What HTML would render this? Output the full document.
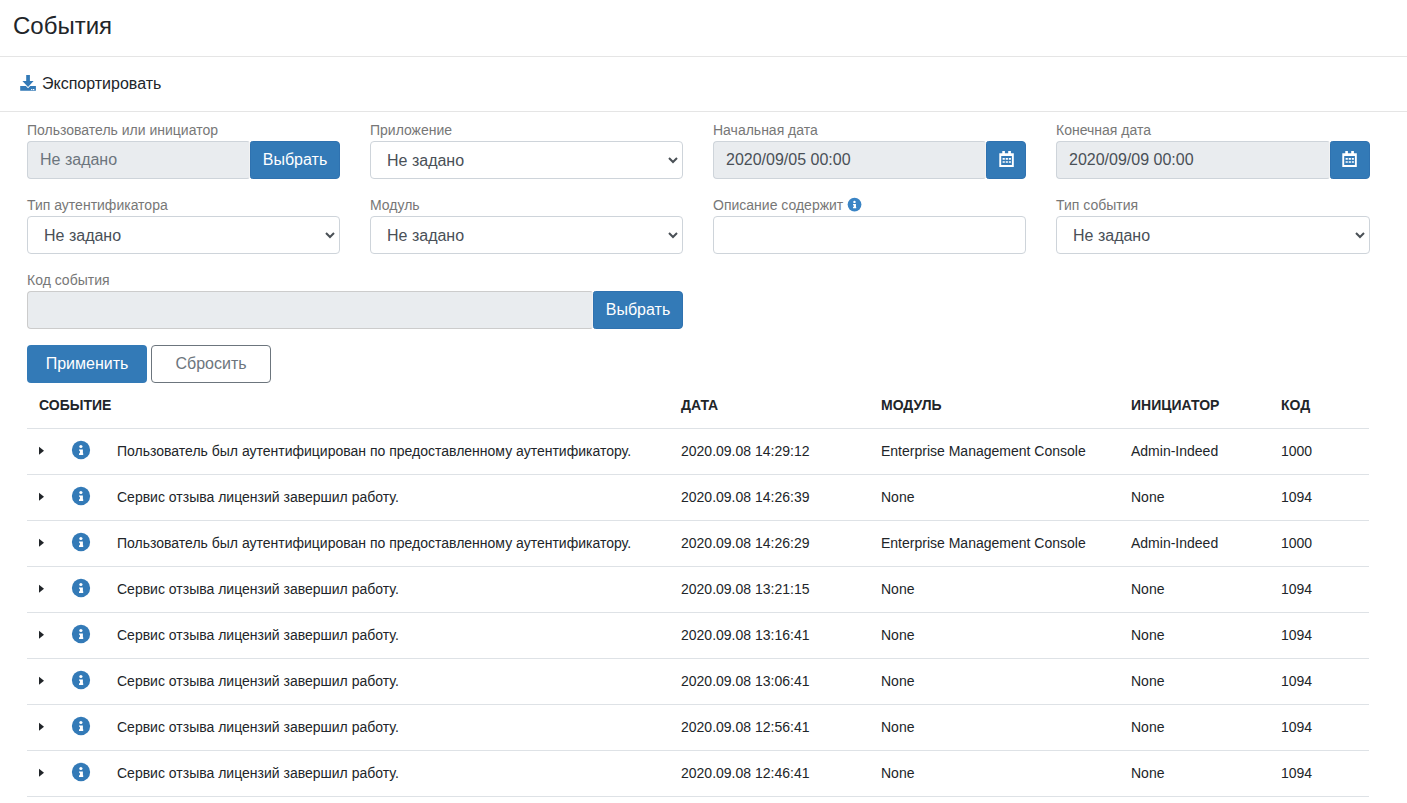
<!DOCTYPE html>
<html><head><meta charset="utf-8">
<style>
*{box-sizing:border-box}
html,body{margin:0;padding:0;background:#fff}
body{font-family:"Liberation Sans",sans-serif;color:#212529;width:1407px;height:803px;overflow:hidden;position:relative}
.abs{position:absolute}
.title{left:13px;top:12px;font-size:24px;line-height:28px;color:#212529;white-space:nowrap}
.hline{left:0;width:1407px;height:1px;background:#e5e5e5}
.export{left:20px;top:74px;font-size:16px;line-height:20px;white-space:nowrap}
.export svg{position:absolute;left:0;top:1px}
.export span{position:absolute;left:22px;top:0}
.lbl{font-size:14px;line-height:17px;color:#777;white-space:nowrap}
.inp{height:38px;border:1px solid #ced4da;border-radius:4px;background:#fff;font-size:16px;line-height:36px;padding:0 12px;color:#495057;white-space:nowrap}
.inp.ro{background:#e9ecef;color:#6c757d}
.btn{height:38px;border-radius:4px;background:#337ab7;color:#fff;font-size:16px;line-height:38px;text-align:center;white-space:nowrap}
.sel{padding-left:16px;padding-top:1px;color:#495057}
.chev{position:absolute;right:4px;top:14px}
.th{font-size:14px;font-weight:bold;line-height:17px;color:#212529;white-space:nowrap}
.td{font-size:14px;line-height:17px;color:#212529;white-space:nowrap}
.rowline{left:27px;width:1342px;height:1px;background:#dee2e6}
</style></head><body>
<div class="abs title">События</div>
<div class="abs hline" style="top:56px"></div>
<div class="abs export"><svg width="16" height="16" viewBox="0 0 16 16"><path fill="#337ab7" d="M6.2 0H9.9V6H13.6L8.05 11.9L2.4 6H6.2Z"/><path fill="#337ab7" d="M0.2 11.1H5.9L8.05 13.2L10.2 11.1H15.9V15.8H0.2Z"/><rect x="11.1" y="14" width="1.2" height="1.1" fill="#fff"/><rect x="12.9" y="14" width="1.4" height="1.1" fill="#fff"/></svg><span>Экспортировать</span></div>
<div class="abs hline" style="top:111px"></div>

<!-- row 1 -->
<div class="abs lbl" style="left:27px;top:122px">Пользователь или инициатор</div>
<div class="abs inp ro" style="left:27px;top:141px;width:223px;border-radius:4px 3px 3px 4px;border-right-color:#f2f2f2">Не задано</div>
<div class="abs btn" style="left:250px;top:141px;width:90px;border-radius:2.5px 4px 4px 2.5px;border:1px solid #2f72b0;line-height:36px">Выбрать</div>

<div class="abs lbl" style="left:370px;top:122px">Приложение</div>
<div class="abs inp sel" style="left:370px;top:141px;width:313px">Не задано<svg class="chev" width="10" height="8" viewBox="0 0 10 8"><path d="M1 2l4 4 4-4" stroke="#4a5056" stroke-width="2" fill="none"/></svg></div>

<div class="abs lbl" style="left:713px;top:122px">Начальная дата</div>
<div class="abs inp ro" style="left:713px;top:141px;width:273px;border-radius:4px 3px 3px 4px;border-right-color:#f2f2f2;color:#495057">2020/09/05 00:00</div>
<div class="abs btn" style="left:986px;top:141px;width:40px;border-radius:2.5px 4px 4px 2.5px;border:1px solid #2f72b0"></div>

<div class="abs lbl" style="left:1056px;top:122px">Конечная дата</div>
<div class="abs inp ro" style="left:1056px;top:141px;width:274px;border-radius:4px 3px 3px 4px;border-right-color:#f2f2f2;color:#495057">2020/09/09 00:00</div>
<div class="abs btn" style="left:1330px;top:141px;width:40px;border-radius:2.5px 4px 4px 2.5px;border:1px solid #2f72b0"></div>

<!-- row 2 -->
<div class="abs lbl" style="left:27px;top:197px">Тип аутентификатора</div>
<div class="abs inp sel" style="left:27px;top:216px;width:313px">Не задано<svg class="chev" width="10" height="8" viewBox="0 0 10 8"><path d="M1 2l4 4 4-4" stroke="#4a5056" stroke-width="2" fill="none"/></svg></div>

<div class="abs lbl" style="left:370px;top:197px">Модуль</div>
<div class="abs inp sel" style="left:370px;top:216px;width:313px">Не задано<svg class="chev" width="10" height="8" viewBox="0 0 10 8"><path d="M1 2l4 4 4-4" stroke="#4a5056" stroke-width="2" fill="none"/></svg></div>

<div class="abs lbl" style="left:713px;top:197px">Описание содержит</div>
<div class="abs inp" style="left:713px;top:216px;width:313px"></div>

<div class="abs lbl" style="left:1056px;top:197px">Тип события</div>
<div class="abs inp sel" style="left:1056px;top:216px;width:314px">Не задано<svg class="chev" width="10" height="8" viewBox="0 0 10 8"><path d="M1 2l4 4 4-4" stroke="#4a5056" stroke-width="2" fill="none"/></svg></div>

<!-- row 3 -->
<div class="abs lbl" style="left:27px;top:272px">Код события</div>
<div class="abs inp ro" style="left:27px;top:291px;width:566px;border-radius:4px 3px 3px 4px;border-color:#ccc;border-right-color:#f2f2f2"></div>
<div class="abs btn" style="left:593px;top:291px;width:90px;border-radius:2.5px 4px 4px 2.5px;border:1px solid #2f72b0;line-height:36px">Выбрать</div>

<div class="abs btn" style="left:27px;top:345px;width:120px">Применить</div>
<div class="abs btn" style="left:151px;top:345px;width:120px;background:#fff;border:1px solid #6c757d;color:#6c757d;line-height:36px">Сбросить</div>

<!-- table -->
<div class="abs th" style="left:39px;top:397px">СОБЫТИЕ</div>
<div class="abs th" style="left:681px;top:397px">ДАТА</div>
<div class="abs th" style="left:881px;top:397px">МОДУЛЬ</div>
<div class="abs th" style="left:1131px;top:397px">ИНИЦИАТОР</div>
<div class="abs th" style="left:1281px;top:397px">КОД</div>
<div class="abs rowline" style="top:428px"></div>
<svg class="abs" style="left:39px;top:446px" width="6" height="10" viewBox="0 0 6 10"><path d="M0 0.8L5 4.8 0 8.8Z" fill="#212529"/></svg>
<svg class="abs" style="left:70.9px;top:439.7px" width="20" height="20" viewBox="0 0 20 20"><circle cx="10" cy="10" r="9.15" fill="#337ab7"/><circle cx="9.9" cy="6.5" r="1.6" fill="#fff"/><path fill="#fff" d="M8.0 9.4H11.9V13.3H12.2V15.0H8.0V13.3H8.9V10.8H8.0Z"/></svg>
<div class="abs td" style="left:117px;top:443px">Пользователь был аутентифицирован по предоставленному аутентификатору.</div>
<div class="abs td" style="left:681px;top:443px">2020.09.08 14:29:12</div>
<div class="abs td" style="left:881px;top:443px">Enterprise Management Console</div>
<div class="abs td" style="left:1131px;top:443px">Admin-Indeed</div>
<div class="abs td" style="left:1281px;top:443px">1000</div>
<div class="abs rowline" style="top:474px"></div>
<svg class="abs" style="left:39px;top:492px" width="6" height="10" viewBox="0 0 6 10"><path d="M0 0.8L5 4.8 0 8.8Z" fill="#212529"/></svg>
<svg class="abs" style="left:70.9px;top:485.7px" width="20" height="20" viewBox="0 0 20 20"><circle cx="10" cy="10" r="9.15" fill="#337ab7"/><circle cx="9.9" cy="6.5" r="1.6" fill="#fff"/><path fill="#fff" d="M8.0 9.4H11.9V13.3H12.2V15.0H8.0V13.3H8.9V10.8H8.0Z"/></svg>
<div class="abs td" style="left:117px;top:489px">Сервис отзыва лицензий завершил работу.</div>
<div class="abs td" style="left:681px;top:489px">2020.09.08 14:26:39</div>
<div class="abs td" style="left:881px;top:489px">None</div>
<div class="abs td" style="left:1131px;top:489px">None</div>
<div class="abs td" style="left:1281px;top:489px">1094</div>
<div class="abs rowline" style="top:520px"></div>
<svg class="abs" style="left:39px;top:538px" width="6" height="10" viewBox="0 0 6 10"><path d="M0 0.8L5 4.8 0 8.8Z" fill="#212529"/></svg>
<svg class="abs" style="left:70.9px;top:531.7px" width="20" height="20" viewBox="0 0 20 20"><circle cx="10" cy="10" r="9.15" fill="#337ab7"/><circle cx="9.9" cy="6.5" r="1.6" fill="#fff"/><path fill="#fff" d="M8.0 9.4H11.9V13.3H12.2V15.0H8.0V13.3H8.9V10.8H8.0Z"/></svg>
<div class="abs td" style="left:117px;top:535px">Пользователь был аутентифицирован по предоставленному аутентификатору.</div>
<div class="abs td" style="left:681px;top:535px">2020.09.08 14:26:29</div>
<div class="abs td" style="left:881px;top:535px">Enterprise Management Console</div>
<div class="abs td" style="left:1131px;top:535px">Admin-Indeed</div>
<div class="abs td" style="left:1281px;top:535px">1000</div>
<div class="abs rowline" style="top:566px"></div>
<svg class="abs" style="left:39px;top:584px" width="6" height="10" viewBox="0 0 6 10"><path d="M0 0.8L5 4.8 0 8.8Z" fill="#212529"/></svg>
<svg class="abs" style="left:70.9px;top:577.7px" width="20" height="20" viewBox="0 0 20 20"><circle cx="10" cy="10" r="9.15" fill="#337ab7"/><circle cx="9.9" cy="6.5" r="1.6" fill="#fff"/><path fill="#fff" d="M8.0 9.4H11.9V13.3H12.2V15.0H8.0V13.3H8.9V10.8H8.0Z"/></svg>
<div class="abs td" style="left:117px;top:581px">Сервис отзыва лицензий завершил работу.</div>
<div class="abs td" style="left:681px;top:581px">2020.09.08 13:21:15</div>
<div class="abs td" style="left:881px;top:581px">None</div>
<div class="abs td" style="left:1131px;top:581px">None</div>
<div class="abs td" style="left:1281px;top:581px">1094</div>
<div class="abs rowline" style="top:612px"></div>
<svg class="abs" style="left:39px;top:630px" width="6" height="10" viewBox="0 0 6 10"><path d="M0 0.8L5 4.8 0 8.8Z" fill="#212529"/></svg>
<svg class="abs" style="left:70.9px;top:623.7px" width="20" height="20" viewBox="0 0 20 20"><circle cx="10" cy="10" r="9.15" fill="#337ab7"/><circle cx="9.9" cy="6.5" r="1.6" fill="#fff"/><path fill="#fff" d="M8.0 9.4H11.9V13.3H12.2V15.0H8.0V13.3H8.9V10.8H8.0Z"/></svg>
<div class="abs td" style="left:117px;top:627px">Сервис отзыва лицензий завершил работу.</div>
<div class="abs td" style="left:681px;top:627px">2020.09.08 13:16:41</div>
<div class="abs td" style="left:881px;top:627px">None</div>
<div class="abs td" style="left:1131px;top:627px">None</div>
<div class="abs td" style="left:1281px;top:627px">1094</div>
<div class="abs rowline" style="top:658px"></div>
<svg class="abs" style="left:39px;top:676px" width="6" height="10" viewBox="0 0 6 10"><path d="M0 0.8L5 4.8 0 8.8Z" fill="#212529"/></svg>
<svg class="abs" style="left:70.9px;top:669.7px" width="20" height="20" viewBox="0 0 20 20"><circle cx="10" cy="10" r="9.15" fill="#337ab7"/><circle cx="9.9" cy="6.5" r="1.6" fill="#fff"/><path fill="#fff" d="M8.0 9.4H11.9V13.3H12.2V15.0H8.0V13.3H8.9V10.8H8.0Z"/></svg>
<div class="abs td" style="left:117px;top:673px">Сервис отзыва лицензий завершил работу.</div>
<div class="abs td" style="left:681px;top:673px">2020.09.08 13:06:41</div>
<div class="abs td" style="left:881px;top:673px">None</div>
<div class="abs td" style="left:1131px;top:673px">None</div>
<div class="abs td" style="left:1281px;top:673px">1094</div>
<div class="abs rowline" style="top:704px"></div>
<svg class="abs" style="left:39px;top:722px" width="6" height="10" viewBox="0 0 6 10"><path d="M0 0.8L5 4.8 0 8.8Z" fill="#212529"/></svg>
<svg class="abs" style="left:70.9px;top:715.7px" width="20" height="20" viewBox="0 0 20 20"><circle cx="10" cy="10" r="9.15" fill="#337ab7"/><circle cx="9.9" cy="6.5" r="1.6" fill="#fff"/><path fill="#fff" d="M8.0 9.4H11.9V13.3H12.2V15.0H8.0V13.3H8.9V10.8H8.0Z"/></svg>
<div class="abs td" style="left:117px;top:719px">Сервис отзыва лицензий завершил работу.</div>
<div class="abs td" style="left:681px;top:719px">2020.09.08 12:56:41</div>
<div class="abs td" style="left:881px;top:719px">None</div>
<div class="abs td" style="left:1131px;top:719px">None</div>
<div class="abs td" style="left:1281px;top:719px">1094</div>
<div class="abs rowline" style="top:750px"></div>
<svg class="abs" style="left:39px;top:768px" width="6" height="10" viewBox="0 0 6 10"><path d="M0 0.8L5 4.8 0 8.8Z" fill="#212529"/></svg>
<svg class="abs" style="left:70.9px;top:761.7px" width="20" height="20" viewBox="0 0 20 20"><circle cx="10" cy="10" r="9.15" fill="#337ab7"/><circle cx="9.9" cy="6.5" r="1.6" fill="#fff"/><path fill="#fff" d="M8.0 9.4H11.9V13.3H12.2V15.0H8.0V13.3H8.9V10.8H8.0Z"/></svg>
<div class="abs td" style="left:117px;top:765px">Сервис отзыва лицензий завершил работу.</div>
<div class="abs td" style="left:681px;top:765px">2020.09.08 12:46:41</div>
<div class="abs td" style="left:881px;top:765px">None</div>
<div class="abs td" style="left:1131px;top:765px">None</div>
<div class="abs td" style="left:1281px;top:765px">1094</div>
<div class="abs rowline" style="top:796px"></div>
<svg class="abs" style="left:847px;top:197.2px" width="15.08" height="15.08" viewBox="0 0 20 20"><circle cx="10" cy="10" r="9.15" fill="#3a84c5"/><circle cx="9.9" cy="6.5" r="1.6" fill="#fff"/><path fill="#fff" d="M8.0 9.4H11.9V13.3H12.2V15.0H8.0V13.3H8.9V10.8H8.0Z"/></svg>
<svg class="abs" style="left:999px;top:151px" width="16" height="17" viewBox="0 0 16 17"><path fill="#fff" fill-rule="evenodd" d="M3.3 0H5.9V2.2H9.2V0H11.9V2.2H14.8V15.9H0.3V2.2H3.3ZM2.2 5V14H12.9V5Z"/><path fill="#fff" d="M3.6 7.1h2.2v1.7H3.6zM6.7 7.1h2.2v1.7H6.7zM9.8 7.1h2.1v1.7H9.8zM3.6 10.2h2.2v1.6H3.6zM6.7 10.2h2.2v1.6H6.7zM9.8 10.2h2.1v1.6H9.8z"/></svg>
<svg class="abs" style="left:1342px;top:151px" width="16" height="17" viewBox="0 0 16 17"><path fill="#fff" fill-rule="evenodd" d="M3.3 0H5.9V2.2H9.2V0H11.9V2.2H14.8V15.9H0.3V2.2H3.3ZM2.2 5V14H12.9V5Z"/><path fill="#fff" d="M3.6 7.1h2.2v1.7H3.6zM6.7 7.1h2.2v1.7H6.7zM9.8 7.1h2.1v1.7H9.8zM3.6 10.2h2.2v1.6H3.6zM6.7 10.2h2.2v1.6H6.7zM9.8 10.2h2.1v1.6H9.8z"/></svg>
</body></html>
